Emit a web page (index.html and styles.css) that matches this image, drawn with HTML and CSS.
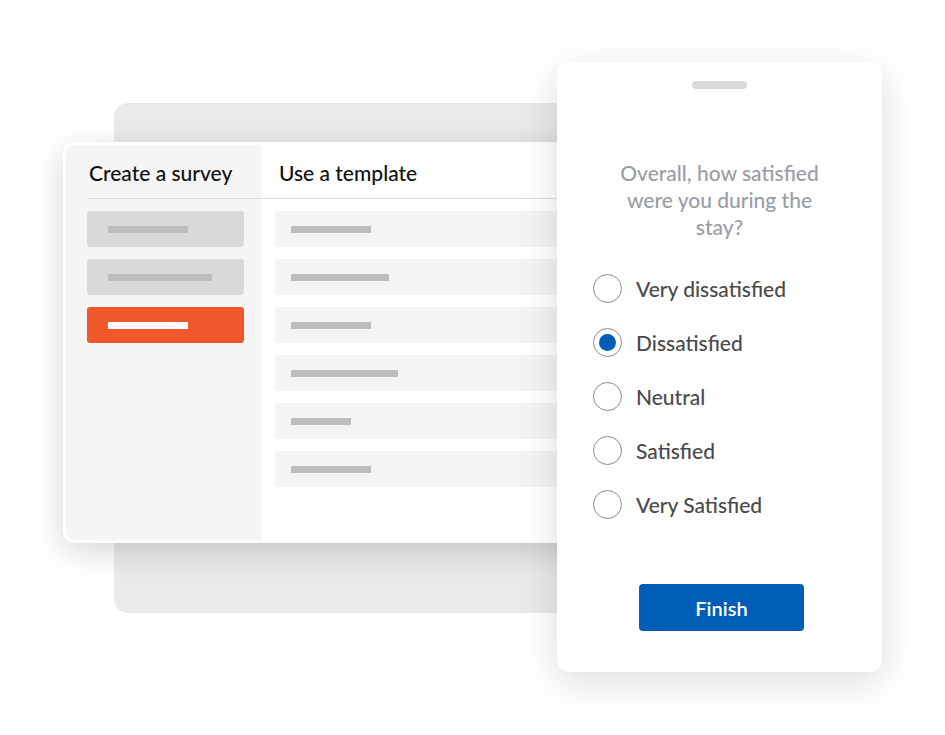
FILE: index.html
```html
<!DOCTYPE html>
<html lang="en">

<head>
    <meta charset="UTF-8">
    <meta name="viewport" content="width=device-width, initial-scale=1.0">
    <title>Survey builder</title>
    <link rel="stylesheet" href="styles.css">
</head>

<body>
    <div class="stage">
        <div class="back-card"></div>

        <div class="builder">
            <div class="sidebar">
                <div class="heading side-heading">Create a survey</div>
                <div class="side-list">
                    <div class="side-item"><span class="bar" style="width: 80px"></span></div>
                    <div class="side-item"><span class="bar" style="width: 104px"></span></div>
                    <div class="side-item active"><span class="bar" style="width: 80px"></span></div>
                </div>
            </div>
            <div class="main">
                <div class="heading main-heading">Use a template</div>
                <div class="template-list">
                    <div class="template-item"><span class="bar" style="width: 80px"></span></div>
                    <div class="template-item"><span class="bar" style="width: 98px"></span></div>
                    <div class="template-item"><span class="bar" style="width: 80px"></span></div>
                    <div class="template-item"><span class="bar" style="width: 107px"></span></div>
                    <div class="template-item"><span class="bar" style="width: 60px"></span></div>
                    <div class="template-item"><span class="bar" style="width: 80px"></span></div>
                </div>
            </div>
        </div>

        <div class="phone">
            <div class="handle"></div>
            <p class="question">Overall, how satisfied were you during the stay?</p>
            <div class="options">
                <label class="option"><span class="radio"></span>Very dissatisfied</label>
                <label class="option"><span class="radio checked"></span>Dissatisfied</label>
                <label class="option"><span class="radio"></span>Neutral</label>
                <label class="option"><span class="radio"></span>Satisfied</label>
                <label class="option"><span class="radio"></span>Very Satisfied</label>
            </div>
            <button class="finish">Finish</button>
        </div>
    </div>
</body>

</html>
```

FILE: styles.css
```css
body {
    margin: 0;
    background-color: #fff;
    font-family: Lato, 'Noto Sans', sans-serif;
}

.stage {
    position: relative;
    width: 945px;
    height: 735px;
    overflow: hidden;
}

.back-card {
    position: absolute;
    left: 114px;
    top: 103px;
    width: 520px;
    height: 510px;
    background-color: #eaeaea;
    border-radius: 14px;
}

.builder {
    position: absolute;
    left: 63px;
    top: 142px;
    width: 560px;
    height: 401px;
    box-sizing: border-box;
    display: flex;
    background-color: #fff;
    border: 3px solid #fff;
    border-radius: 12px;
    box-shadow: 0 8px 32px rgba(0, 0, 0, 0.17);
}

.sidebar {
    width: 195px;
    flex-shrink: 0;
    background-color: #f5f5f5;
    border-radius: 9px 0 0 9px;
}

.main {
    flex: 1;
}

.heading {
    height: 54px;
    box-sizing: border-box;
    padding-top: 14px;
    font-size: 21px;
    font-weight: 500;
    line-height: 28px;
    color: #111;
    border-bottom: 1px solid #dcdcdc;
}

.side-heading {
    margin-left: 22px;
    padding-left: 1px;
}

.main-heading {
    padding-left: 18px;
}

.side-list,
.template-list {
    display: flex;
    flex-direction: column;
    gap: 12px;
    padding-top: 12px;
}

.side-list {
    padding-left: 21px;
    padding-right: 17px;
}

.template-list {
    padding-left: 14px;
}

.side-item,
.template-item {
    height: 36px;
    display: flex;
    align-items: center;
    padding-left: 21px;
    border-radius: 3px;
}

.side-item {
    background-color: #d9d9d9;
}

.side-item.active {
    background-color: #f0572a;
}

.template-item {
    padding-left: 16px;
    background-color: #f4f4f4;
}

.bar {
    display: block;
    height: 7px;
    background-color: #bdbdbd;
}

.active .bar {
    background-color: #fff;
}

.phone {
    position: absolute;
    left: 557px;
    top: 62px;
    width: 325px;
    height: 610px;
    box-sizing: border-box;
    display: flex;
    flex-direction: column;
    align-items: center;
    background-color: #fff;
    border-radius: 12px;
    box-shadow: 0 10px 40px rgba(0, 0, 0, 0.14);
}

.handle {
    width: 55px;
    height: 8px;
    margin-top: 19px;
    border-radius: 4px;
    background-color: #d9d9d9;
}

.question {
    width: 220px;
    margin: 70px 0 0;
    text-align: center;
    font-size: 21px;
    font-weight: 500;
    line-height: 27px;
    color: #9a9da4;
}

.options {
    align-self: stretch;
    display: flex;
    flex-direction: column;
    gap: 25px;
    margin-top: 34px;
    padding-left: 36px;
}

.option {
    display: flex;
    align-items: center;
    gap: 14px;
    font-size: 21px;
    font-weight: 500;
    color: #4a4a4a;
}

.radio {
    width: 27px;
    height: 27px;
    border: 1px solid #8a8a8a;
    border-radius: 50%;
    display: flex;
    align-items: center;
    justify-content: center;
}

.radio.checked::after {
    content: '';
    width: 17px;
    height: 17px;
    border-radius: 50%;
    background-color: #005eb8;
}

.finish {
    width: 165px;
    height: 47px;
    margin-top: 65px;
    margin-left: 4px;
    border: none;
    border-radius: 4px;
    background-color: #005eb8;
    color: #fff;
    font-family: inherit;
    font-size: 20px;
    font-weight: 600;
    cursor: pointer;
}
```
